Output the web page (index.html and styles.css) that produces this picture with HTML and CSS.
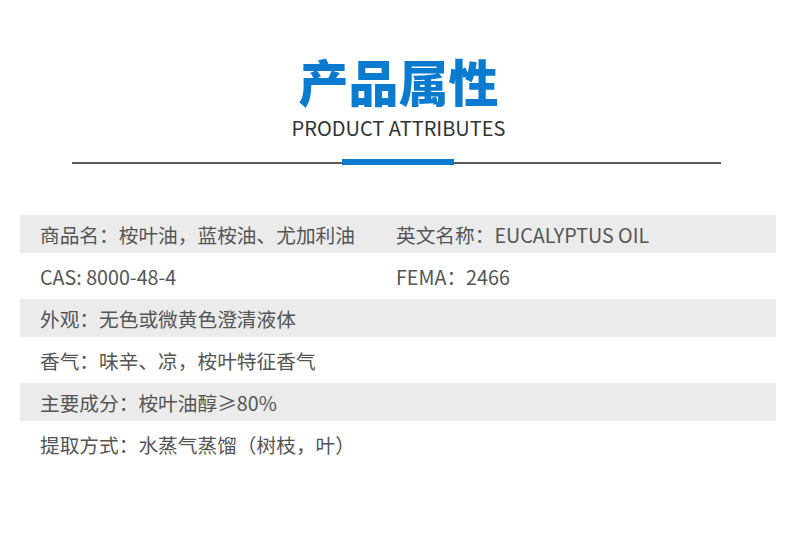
FILE: index.html
```html
<!DOCTYPE html>
<html lang="zh">
<head>
<meta charset="utf-8">
<link rel="stylesheet" href="styles.css">
</head>
<body>
<div class="page">
  <header class="head">
    <h1 class="title">产品属性</h1>
    <div class="subtitle">PRODUCT ATTRIBUTES</div>
    <div class="rule"><span class="accent"></span></div>
  </header>
  <div class="table">
    <div class="row gray"><span class="c1">商品名：桉叶油，蓝桉油、尤加利油</span><span class="c2">英文名称：EUCALYPTUS OIL</span></div>
    <div class="row"><span class="c1">CAS: 8000-48-4</span><span class="c2">FEMA：2466</span></div>
    <div class="row gray"><span class="c1">外观：无色或微黄色澄清液体</span></div>
    <div class="row"><span class="c1">香气：味辛、凉，桉叶特征香气</span></div>
    <div class="row gray"><span class="c1">主要成分：桉叶油醇≥80%</span></div>
    <div class="row"><span class="c1">提取方式：水蒸气蒸馏（树枝，叶）</span></div>
  </div>
</div>
</body>
</html>
```
FILE: styles.css
```css
* { box-sizing: border-box; margin: 0; padding: 0; }
html, body { background: #fff; }
body { width: 799px; height: 534px; overflow: hidden; font-family: "Noto Sans CJK SC", "Noto Sans", sans-serif; }
.page { padding-top: 48px; }
.head { display: flex; flex-direction: column; align-items: center; }
.title { font-size: 50px; line-height: 64px; font-weight: 900; color: #0b7bd0; margin-left: -2px; }
.subtitle { font-size: 20px; line-height: 28px; color: #333; font-weight: 400; margin-top: 2px; margin-left: -2px; }
.rule { position: relative; width: 649px; height: 2px; background: #5a5a5a; margin-top: 20px; margin-left: -7px; }
.accent { position: absolute; left: 270px; top: -3px; width: 112px; height: 6px; background: #0b7bd0; }
.table { margin: 51px 23px 0 20px; display: flex; flex-direction: column; }
.row { height: 42px; display: flex; align-items: center; padding-left: 20px; font-size: 19.7px; color: #555; padding-bottom: 4px; }
.row.gray { background: #ebebeb; height: 38px; margin-bottom: 4px; padding-bottom: 0; padding-top: 1px; }
.row .c1 { width: 356px; }
```
